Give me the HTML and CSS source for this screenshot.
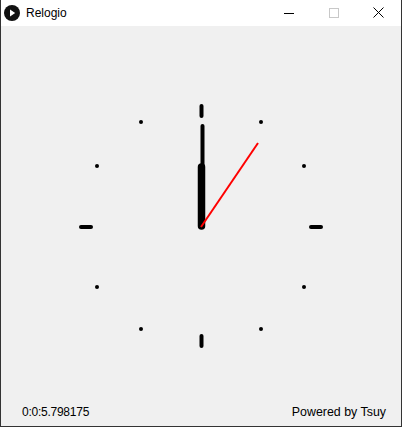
FILE: index.html
```html
<!DOCTYPE html>
<html>
<head>
<meta charset="utf-8">
<link rel="stylesheet" href="styles.css">
</head>
<body>
<div class="window">
  <div class="titlebar">
    <svg class="app-icon" width="16" height="16" viewBox="0 0 16 16">
      <circle cx="8" cy="8" r="8" fill="#111"/>
      <path d="M6 4.5 L11.2 8 L6 11.5 Z" fill="#fff"/>
    </svg>
    <span class="title">Relogio</span>
    <div class="controls">
      <div class="ctl">
        <svg width="10" height="10" viewBox="0 0 10 10"><path d="M0 5.5 H10" stroke="#000" stroke-width="1"/></svg>
      </div>
      <div class="ctl">
        <svg width="10" height="10" viewBox="0 0 10 10"><rect x="0.5" y="0.5" width="9" height="9" fill="none" stroke="#c8c8c8" stroke-width="1"/></svg>
      </div>
      <div class="ctl">
        <svg width="11" height="11" viewBox="0 0 11 11"><path d="M0.5 0.5 L10.5 10.5 M10.5 0.5 L0.5 10.5" stroke="#000" stroke-width="1"/></svg>
      </div>
    </div>
  </div>
  <div class="content">
    <svg class="clock" width="400" height="372" viewBox="0 0 400 372">
      <g fill="#000">
        <circle cx="260" cy="96" r="2"/>
        <circle cx="303" cy="140" r="2"/>
        <circle cx="303" cy="261" r="2"/>
        <circle cx="260" cy="303" r="2"/>
        <circle cx="140" cy="303" r="2"/>
        <circle cx="96" cy="261" r="2"/>
        <circle cx="96" cy="140" r="2"/>
        <circle cx="140" cy="96" r="2"/>
      </g>
      <g stroke="#000" stroke-width="4" stroke-linecap="round">
        <line x1="200.5" y1="80" x2="200.5" y2="90"/>
        <line x1="200.5" y1="310" x2="200.5" y2="320"/>
        <line x1="80" y1="201" x2="90" y2="201"/>
        <line x1="310" y1="201" x2="320" y2="201"/>
      </g>
      <line x1="200.5" y1="200" x2="200.5" y2="141" stroke="#000" stroke-width="7.5" stroke-linecap="round"/>
      <line x1="201.5" y1="200" x2="201.5" y2="100" stroke="#000" stroke-width="4" stroke-linecap="round"/>
      <line x1="200" y1="201" x2="257" y2="117" stroke="#ff0000" stroke-width="2"/>
    </svg>
    <div class="footer">
      <span class="elapsed">0:0:5.798175</span>
      <span class="credit">Powered by Tsuy</span>
    </div>
  </div>
</div>
</body>
</html>
```
FILE: styles.css
```css
* { box-sizing: border-box; }
html, body { margin: 0; padding: 0; }
body {
  width: 402px;
  height: 427px;
  overflow: hidden;
  font-family: "Liberation Sans", Arial, sans-serif;
  background: #fff;
}
.window {
  width: 402px;
  height: 427px;
  border: 1px solid #333;
  border-top: none;
  display: flex;
  flex-direction: column;
}
.titlebar {
  height: 26px;
  background: #fff;
  display: flex;
  align-items: center;
  padding-left: 3px;
}
.app-icon {
  display: block;
  margin-top: -1px;
}
.title {
  margin-left: 6px;
  font-size: 12px;
  color: #000;
  margin-top: -1px;
}
.controls {
  margin-left: auto;
  display: flex;
  height: 26px;
}
.ctl {
  width: 45px;
  height: 26px;
  display: flex;
  align-items: center;
  justify-content: center;
}
.ctl svg { display: block; margin-top: -1px; }
.content {
  flex: 1;
  background: #f0f0f0;
  display: flex;
  flex-direction: column;
}
.clock { display: block; }
.footer {
  height: 28px;
  display: flex;
  align-items: center;
  justify-content: space-between;
  padding: 0 15px 0 21px;
  font-size: 12px;
  color: #000;
}
.elapsed { letter-spacing: -0.25px; }
.credit { font-size: 12.4px; }
```
